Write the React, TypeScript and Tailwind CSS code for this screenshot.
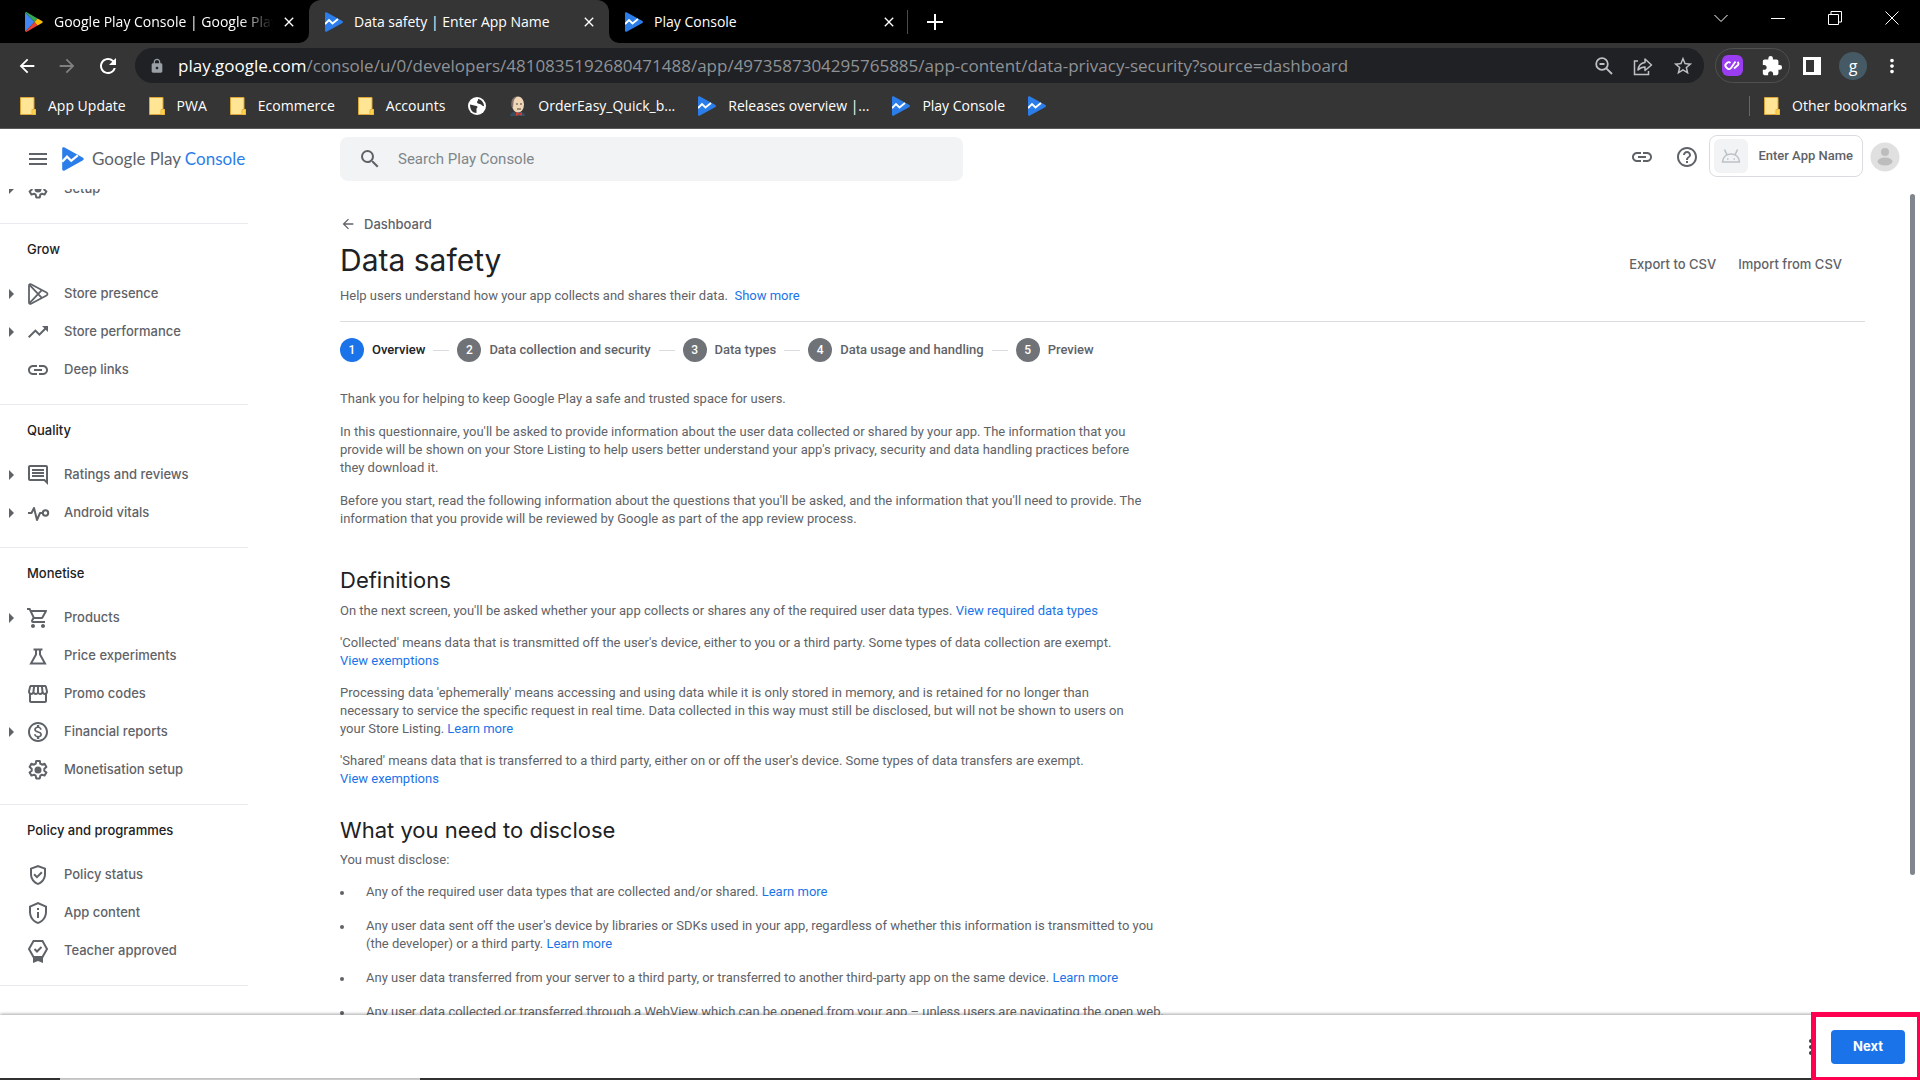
import type React from "react"

import {
  MdArrowBack,
  MdArrowForward,
  MdClose,
  MdExtension,
  MdHelpOutline,
  MdLink,
  MdLock,
  MdMenu,
  MdMoreVert,
  MdOutlineGppGood,
  MdOutlineInsertComment,
  MdOutlineMonetizationOn,
  MdOutlinePrivacyTip,
  MdOutlineShoppingCart,
  MdOutlineStorefront,
  MdRefresh,
  MdSearch,
  MdStarOutline,
  MdTrendingUp,
} from "react-icons/md"

interface IconProps {
  className?: string
}

const ConsoleLogo = ({ className = "" }: IconProps) => (
  <svg className={className} viewBox="0 0 18 20">
    <path d="M0 1.5C0 .4 1 0 2 .5L17 8.7c1.300.7 1.300 1.900 0 2.600L2 19.500C1 20 0 19.600 0 18.500Z" fill="#2b7de9" />
    <path d="M0 12.200 4 8l3.500 3.500L13 7" fill="none" stroke="#fff" strokeWidth="1.900" />
  </svg>
)

const PlayLogo = ({ className = "" }: IconProps) => (
  <svg className={className} viewBox="0 0 18 20">
    <path d="M.4.6 9.500 10 .4 19.400C.1 19 0 18.800 0 18.400V1.600C0 1.200.1.900.4.600Z" fill="#4285f4" />
    <path d="M.4.6C.9 0 1.500 0 2.200.400L12.600 6.600 9.500 10Z" fill="#34a853" />
    <path d="M.4 19.400c.5.600 1.100.600 1.800.200l10.400-6.200L9.500 10Z" fill="#ea4335" />
    <path d="M12.600 6.600 17 9c1 .6 1 1.400 0 2l-4.400 2.400L9.500 10Z" fill="#fbbc04" />
  </svg>
)

const FolderIcon = () => (
  <svg className="w-4 h-[18px] shrink-0" viewBox="0 0 16 18">
    <path d="M.5.5h13.500v12h1.500v5H.5Z" fill="#ffe594" stroke="#dba53a" />
    <path d="M12 17.500v-5h3.500v5Z" fill="#ffd34f" stroke="#e8b93c" />
  </svg>
)

const GlobeIcon = () => (
  <svg className="w-[18px] h-[18px] shrink-0" viewBox="0 0 18 18">
    <circle cx="9" cy="9" r="9" fill="#fff" />
    <path d="M2 7.500 8.500 9c1.500.5 1 2 0 2.500v4.500C4.500 16 2 12.500 2 7.500Z" fill="#353535" />
    <path d="M10 2c3.500.5 6 3.500 6 7-1 .5-2-.5-3-1.500-1.500-1-3.500-.5-4-2C8.700 4.200 10.500 4 10 2Z" fill="#353535" />
  </svg>
)

const PersonBookmarkIcon = () => (
  <svg className="w-[17px] h-[20px] shrink-0" viewBox="0 0 17 20">
    <path d="M1 20c0-3 3-4.500 7.500-4.500S16 17 16 20Z" fill="#335061" />
    <ellipse cx="9" cy="8.500" rx="6" ry="8" fill="#f0d6b7" />
    <path d="M2.500 11C1.500 4 4 .5 8 .5c-2.500 2-3.500 4-3.500 6l-.5 5Z" fill="#81726a" />
    <path d="M7 8h2M11 8h2M8 13h4" stroke="#49403a" />
    <path d="m7 16 3 1.500 3-1.500v4l-3-1.500L7 20Z" fill="#d33833" />
  </svg>
)

const ZoomOutIcon = () => (
  <svg className="w-5 h-5" viewBox="0 0 20 20" fill="none" stroke="currentColor" strokeWidth="1.800">
    <circle cx="8" cy="8" r="5.800" />
    <path d="m12.300 12.300 5.700 5.700M5.500 8h5" />
  </svg>
)

const ShareIcon = () => (
  <svg className="w-5 h-5" viewBox="0 0 20 20" fill="none" stroke="currentColor" strokeWidth="1.500">
    <path d="M5 5H1.500v13.500h14V15" />
    <path d="M5 14c.5-4.500 3-7 7-7.500V3l6.500 6-6.500 5.500V11c-3 0-5 1-7 3Z" strokeLinejoin="round" />
  </svg>
)

const AndroidIcon = () => (
  <svg className="w-5 h-4" viewBox="0 0 20 16" fill="none" stroke="#bdc1c6" strokeWidth="1.600">
    <path d="M1.500 14C2 9 5.500 6 10 6s8 3 8.500 8ZM6 7 3.500 1.500M14 7l2.500-5.500" strokeLinejoin="round" />
    <path d="M6 11h1.500M12.500 11H14" />
  </svg>
)

const GearIcon = () => (
  <svg className="w-6 h-6" viewBox="0 0 24 24" fill="none" stroke="currentColor" strokeWidth="2">
    <path
      d="M10.200 3h3.600l.5 2.700 1.700 1 2.600-.9 1.800 3.100-2.100 1.800v2l2.100 1.800-1.800 3.100-2.600-.9-1.700 1-.5 2.700h-3.600l-.5-2.700-1.700-1-2.600.9-1.800-3.100 2.100-1.800v-2L3.600 8.900l1.800-3.100 2.600.9 1.700-1Z"
      strokeLinejoin="round"
    />
    <circle cx="12" cy="12" r="3.500" fill="currentColor" stroke="none" />
  </svg>
)

const StorePresenceIcon = () => (
  <svg className="w-6 h-6" viewBox="0 0 24 24" fill="none" stroke="currentColor" strokeWidth="1.800" strokeLinejoin="round">
    <path d="M3 3.500c0-1.200 1-1.700 2-1.200l15.500 8.200c1.300.7 1.300 2.300 0 3L5 21.700c-1 .5-2 0-2-1.200Z" />
    <path d="m3.500 2.800 12.300 13M3.500 21.200l12.300-13" />
  </svg>
)

const VitalsIcon = () => (
  <svg className="w-6 h-6" viewBox="0 0 24 24" fill="none" stroke="currentColor" strokeWidth="2" strokeLinejoin="round">
    <path d="M2 12h3.500L8 7l3 12 3-7h2.500" />
    <circle cx="19.500" cy="12" r="2.700" />
  </svg>
)

const FlaskIcon = () => (
  <svg className="w-6 h-6" viewBox="0 0 24 24" fill="none" stroke="currentColor" strokeWidth="2">
    <path d="M7.500 5.500h9M10 5.500v5L5 19.500h14L14 10.500v-5" />
  </svg>
)

const TeacherIcon = () => (
  <svg className="w-6 h-6" viewBox="0 0 24 24" fill="none" stroke="currentColor" strokeWidth="2">
    <path d="M7.500 2h9l4.500 8-4.500 8h-9L3 10Z" />
    <path d="m8.500 10 2.500 2.500L15.500 8" />
    <path d="M7 18h10v6l-5-2-5 2Z" fill="currentColor" stroke="none" />
  </svg>
)

interface NavItem {
  label: string
  icon: React.ReactNode
  expandable?: boolean
}

const sections: { title: string; items: NavItem[] }[] = [
  {
    title: "Grow",
    items: [
      { label: "Store presence", icon: <StorePresenceIcon />, expandable: true },
      { label: "Store performance", icon: <MdTrendingUp />, expandable: true },
      { label: "Deep links", icon: <MdLink /> },
    ],
  },
  {
    title: "Quality",
    items: [
      { label: "Ratings and reviews", icon: <MdOutlineInsertComment />, expandable: true },
      { label: "Android vitals", icon: <VitalsIcon />, expandable: true },
    ],
  },
  {
    title: "Monetise",
    items: [
      { label: "Products", icon: <MdOutlineShoppingCart />, expandable: true },
      { label: "Price experiments", icon: <FlaskIcon /> },
      { label: "Promo codes", icon: <MdOutlineStorefront /> },
      { label: "Financial reports", icon: <MdOutlineMonetizationOn />, expandable: true },
      { label: "Monetisation setup", icon: <GearIcon /> },
    ],
  },
  {
    title: "Policy and programmes",
    items: [
      { label: "Policy status", icon: <MdOutlineGppGood /> },
      { label: "App content", icon: <MdOutlinePrivacyTip /> },
      { label: "Teacher approved", icon: <TeacherIcon /> },
    ],
  },
]

const steps = ["Overview", "Data collection and security", "Data types", "Data usage and handling", "Preview"]

const tabs = [
  { title: "Google Play Console | Google Play", icon: <PlayLogo className="w-[18px] h-5 shrink-0" /> },
  { title: "Data safety | Enter App Name", icon: <ConsoleLogo className="w-[18px] h-5 shrink-0" />, active: true },
  { title: "Play Console", icon: <ConsoleLogo className="w-[18px] h-5 shrink-0" /> },
]

const NavRow = ({ item }: { item: NavItem }) => (
  <a href="#" className="flex items-center h-[38px] pl-2 text-[#5f6368] font-medium">
    <span className="w-[18px]">
      {item.expandable && (
        <svg className="w-[7px] h-[10px]" viewBox="0 0 7 10" fill="currentColor">
          <path d="M1 0l5 5-5 5Z" />
        </svg>
      )}
    </span>
    <span className="w-6 text-[24px]">{item.icon}</span>
    <span className="ml-[14px]">{item.label}</span>
  </a>
)

const Link = ({ children }: { children: React.ReactNode }) => (
  <a href="#" className="text-[#1a73e8]">
    {children}
  </a>
)

const BrowserTabs = () => (
  <div className="flex items-center h-[43px] pl-[9px] bg-black">
    {tabs.map((tab) => (
      <div
        key={tab.title}
        className={`relative flex items-center w-[300px] h-full pl-4 pr-3 ${tab.active ? "bg-[#353535] rounded-t-xl" : ""}`}
      >
        {tab.active && (
          <>
            <svg className="absolute bottom-0 -left-[10px] w-[10px] h-[10px]" viewBox="0 0 10 10">
              <path d="M10 0v10H0A10 10 0 0 0 10 0Z" fill="#353535" />
            </svg>
            <svg className="absolute bottom-0 -right-[10px] w-[10px] h-[10px]" viewBox="0 0 10 10">
              <path d="M0 0v10h10A10 10 0 0 1 0 0Z" fill="#353535" />
            </svg>
          </>
        )}
        {tab.icon}
        <span
          className={`ml-[11px] flex-1 overflow-hidden whitespace-nowrap ${
            tab.title.length > 30 ? "mask-r-from-85% mask-r-to-100%" : ""
          }`}
        >
          {tab.title}
        </span>
        <button type="button" aria-label="Close tab" className="ml-2 text-base">
          <MdClose />
        </button>
      </div>
    ))}
    <div className="w-px h-6 -ml-0.5 bg-[#4a4a4a]" />
    <button type="button" aria-label="New tab" className="ml-[19px]">
      <svg className="w-4 h-4" viewBox="0 0 16 16" stroke="currentColor" strokeWidth="2">
        <path d="M8 0v16M0 8h16" />
      </svg>
    </button>
    <div className="flex ml-auto mb-[7px] stroke-current fill-none">
      <button type="button" aria-label="Search tabs" className="flex justify-center w-[57px]">
        <svg className="w-[14px] h-[14px]" viewBox="0 0 14 14">
          <path d="m.5 4 6.500 6.500L13.500 4" />
        </svg>
      </button>
      <button type="button" aria-label="Minimise" className="flex justify-center w-[57px]">
        <svg className="w-[14px] h-[14px]" viewBox="0 0 14 14">
          <path d="M0 7.500h14" />
        </svg>
      </button>
      <button type="button" aria-label="Restore" className="flex justify-center w-[57px]">
        <svg className="w-[14px] h-[14px]" viewBox="0 0 14 14">
          <path d="M.5 3.500h10v10H.5ZM3 3.500v-3h10.500V11H11" />
        </svg>
      </button>
      <button type="button" aria-label="Close" className="flex justify-center w-[57px]">
        <svg className="w-[14px] h-[14px]" viewBox="0 0 14 14">
          <path d="m.5.5 13 13M13.500.5l-13 13" />
        </svg>
      </button>
    </div>
  </div>
)

const Toolbar = () => (
  <div className="flex items-center h-[45px] pl-4 pr-[17px] text-[22px] bg-[#353535]">
    <button type="button" aria-label="Back">
      <MdArrowBack />
    </button>
    <button type="button" aria-label="Forward" className="ml-[18px] text-[#808080]">
      <MdArrowForward />
    </button>
    <button type="button" aria-label="Reload" className="ml-[18px] text-2xl">
      <MdRefresh />
    </button>
    <div className="flex items-center flex-1 h-[35px] ml-[15px] pl-[14px] pr-[10px] rounded-full bg-[#202124] text-[#bdc1c6]">
      <MdLock className="text-base text-[#9aa0a6]" />
      <div className="ml-[13px] flex-1 text-[17px] leading-6 text-[#8f9296] whitespace-nowrap">
        <span className="text-white">play.google.com</span>
        /console/u/0/developers/4810835192680471488/app/4973587304295765885/app-content/data-privacy-security?source=dashboard
      </div>
      <div className="flex items-center gap-[19px]">
        <ZoomOutIcon />
        <ShareIcon />
        <MdStarOutline />
      </div>
    </div>
    <div className="flex items-center gap-[18px] h-[35px] ml-[11px] px-[6px] rounded-full border border-[#505050]">
      <svg className="w-[21px] h-[21px]" viewBox="0 0 21 21">
        <rect width="21" height="21" rx="6" fill="#9a3df0" />
        <path
          d="M13.500 6.500 9 13c-1 1.500-2.500 1.500-3.500.5L4 12c-1-1-1-2 0-3l1-1c1-1 2.500-1 3.500 0M12 13.500l4-3.500c1-1 .5-2-.5-3"
          fill="none"
          stroke="#fff"
          strokeWidth="1.800"
        />
      </svg>
      <MdExtension />
    </div>
    <svg className="w-[18px] h-[18px] ml-[13px]" viewBox="0 0 18 18">
      <path d="M0 0h18v18H0ZM3 3v12h8V3Z" fill="#fff" fillRule="evenodd" />
    </svg>
    <div className="flex items-center justify-center w-7 h-7 ml-[18px] rounded-full bg-[#455a64] text-base">g</div>
    <MdMoreVert className="ml-[14px]" />
  </div>
)

const Bookmark = ({ icon, label }: { icon: React.ReactNode; label?: string }) => (
  <a href="#" className="flex items-center gap-3 whitespace-nowrap">
    {icon}
    {label}
  </a>
)

const BookmarksBar = () => (
  <div className="flex items-center h-[41px] pb-[5px] pl-5 pr-[13px] gap-[23px] bg-[#353535] border-b border-[#5a5a5a]">
    <Bookmark icon={<FolderIcon />} label="App Update" />
    <Bookmark icon={<FolderIcon />} label="PWA" />
    <Bookmark icon={<FolderIcon />} label="Ecommerce" />
    <Bookmark icon={<FolderIcon />} label="Accounts" />
    <Bookmark icon={<GlobeIcon />} />
    <Bookmark icon={<PersonBookmarkIcon />} label="OrderEasy_Quick_b..." />
    <Bookmark icon={<ConsoleLogo className="w-[18px] h-5" />} label="Releases overview |..." />
    <Bookmark icon={<ConsoleLogo className="w-[18px] h-5" />} label="Play Console" />
    <Bookmark icon={<ConsoleLogo className="w-[18px] h-5" />} />
    <div className="flex items-center gap-[14px] ml-auto">
      <div className="w-px h-5 bg-[#666]" />
      <Bookmark icon={<FolderIcon />} label="Other bookmarks" />
    </div>
  </div>
)

const ConsoleHeader = () => (
  <header className="flex items-center h-[60px] pr-5 shrink-0 text-[#5f6368]">
    <button type="button" aria-label="Menu" className="ml-[26px] text-2xl">
      <MdMenu />
    </button>
    <a href="#" className="flex items-center w-[290px] pl-3 font-['Lato',sans-serif] text-[17px]">
      <ConsoleLogo className="w-[22px] h-6" />
      <span className="ml-2">
        Google Play <span className="text-[#2b7de9]">Console</span>
      </span>
    </a>
    <label className="flex items-center w-[623px] h-11 pl-[18px] rounded-lg bg-[#f1f3f4]">
      <MdSearch className="text-2xl" />
      <input
        type="text"
        aria-label="Search Play Console"
        placeholder="Search Play Console"
        className="flex-1 ml-4 outline-none font-['Roboto',sans-serif] text-[15px] placeholder:text-[#80868b]"
      />
    </label>
    <div className="flex items-center ml-auto mb-1">
      <MdLink className="text-2xl" />
      <MdHelpOutline className="ml-[21px] text-2xl" />
      <button
        type="button"
        className="flex items-center h-[42px] ml-[10px] mb-0.5 pl-1 pr-[9px] rounded-lg border border-[#dadce0] font-['Roboto',sans-serif] text-[13px] font-medium"
      >
        <span className="flex items-center justify-center w-[34px] h-[34px] rounded-md bg-[#f1f3f4]">
          <AndroidIcon />
        </span>
        <span className="ml-[10px]">Enter App Name</span>
      </button>
      <svg className="w-[30px] h-[30px] ml-[7px]" viewBox="0 0 30 30">
        <circle cx="15" cy="15" r="14.500" fill="#e0e0e0" />
        <circle cx="15" cy="10" r="4" fill="#bdbdbd" />
        <ellipse cx="15" cy="19.500" rx="7.500" ry="4" fill="#bdbdbd" />
      </svg>
    </div>
  </header>
)

const Sidebar = () => (
  <nav className="w-[248px] shrink-0 overflow-hidden text-[13px]">
    <div className="-mt-[19px] pb-[15px]">
      <NavRow item={{ label: "Setup", icon: <GearIcon />, expandable: true }} />
    </div>
    {sections.map((section) => (
      <div key={section.title} className="pb-[15px] border-t border-[#e8eaed]">
        <h2 className="flex items-center h-[51px] pl-[27px] text-[#202124] font-medium">{section.title}</h2>
        {section.items.map((item) => (
          <NavRow key={item.label} item={item} />
        ))}
      </div>
    ))}
    <div className="border-t border-[#e8eaed]" />
  </nav>
)

const Stepper = () => (
  <ol className="flex items-center gap-2 mt-4 font-medium">
    {steps.map((step, index) => (
      <li key={step} className="flex items-center gap-2">
        {index > 0 && <span className="w-4 h-px bg-[#dadce0]" />}
        <span
          className={`flex items-center justify-center w-6 h-6 rounded-full text-white text-xs ${
            index === 0 ? "bg-[#1a73e8]" : "bg-[#6f7377]"
          }`}
        >
          {index + 1}
        </span>
        <span className={index === 0 ? "text-[#202124]" : ""}>{step}</span>
      </li>
    ))}
  </ol>
)

const App = () => {
  return (
    <div className="flex flex-col h-screen overflow-hidden bg-white font-['Inter',sans-serif]">
      <div className="shrink-0 font-['Open_Sans',sans-serif] text-[14px] text-white">
        <BrowserTabs />
        <Toolbar />
        <BookmarksBar />
      </div>

      <ConsoleHeader />

      <div className="flex flex-1 min-h-0">
        <Sidebar />

        <main className="flex-1 overflow-hidden pl-[92px] pr-[45px] pt-[26px] font-['Roboto',sans-serif] text-[13px] leading-[18px] text-[#5f6368]">
          <a href="#" className="flex items-center gap-2 font-['Inter',sans-serif] font-medium">
            <MdArrowBack className="text-base" />
            Dashboard
          </a>
          <div className="flex items-center justify-between">
            <h1 className="mt-[9px] font-['Inter',sans-serif] text-[30px] leading-9 text-[#202124]">Data safety</h1>
            <div className="flex gap-[22px] pr-[23px] mt-4 font-['Inter',sans-serif]">
              <button type="button" className="font-medium">
                Export to CSV
              </button>
              <button type="button" className="font-medium">
                Import from CSV
              </button>
            </div>
          </div>
          <p className="mt-[9px] pb-4 border-b border-[#dadce0]">
            Help users understand how your app collects and shares their data. &nbsp;<Link>Show more</Link>
          </p>

          <Stepper />

          <div className="flex flex-col gap-[15px] mt-7">
            <p>Thank you for helping to keep Google Play a safe and trusted space for users.</p>
            <p>
              In this questionnaire, you'll be asked to provide information about the user data collected or shared by your app. The information that you
              <br />
              provide will be shown on your Store Listing to help users better understand your app's privacy, security and data handling practices before
              <br />
              they download it.
            </p>
            <p>
              Before you start, read the following information about the questions that you'll be asked, and the information that you'll need to provide. The
              <br />
              information that you provide will be reviewed by Google as part of the app review process.
            </p>
          </div>

          <h2 className="mt-[38px] font-['Inter',sans-serif] text-[22px] leading-7 text-[#202124]">Definitions</h2>
          <div className="flex flex-col gap-[14px] mt-2">
            <p>
              On the next screen, you'll be asked whether your app collects or shares any of the required user data types. <Link>View required data types</Link>
            </p>
            <p>
              'Collected' means data that is transmitted off the user's device, either to you or a third party. Some types of data collection are exempt.
              <br />
              <Link>View exemptions</Link>
            </p>
            <p>
              Processing data 'ephemerally' means accessing and using data while it is only stored in memory, and is retained for no longer than
              <br />
              necessary to service the specific request in real time. Data collected in this way must still be disclosed, but will not be shown to users on
              <br />
              your Store Listing. <Link>Learn more</Link>
            </p>
            <p>
              'Shared' means data that is transferred to a third party, either on or off the user's device. Some types of data transfers are exempt.
              <br />
              <Link>View exemptions</Link>
            </p>
          </div>

          <h2 className="mt-7 font-['Inter',sans-serif] text-[22px] leading-7 text-[#202124]">What you need to disclose</h2>
          <p className="mt-[7px]">You must disclose:</p>
          <ul className="flex flex-col gap-4 mt-[14px] whitespace-nowrap">
            {[
              <>
                Any of the required user data types that are collected and/or shared. <Link>Learn more</Link>
              </>,
              <>
                Any user data sent off the user's device by libraries or SDKs used in your app, regardless of whether this information is transmitted to you
                <br />
                (the developer) or a third party. <Link>Learn more</Link>
              </>,
              <>
                Any user data transferred from your server to a third party, or transferred to another third-party app on the same device.{" "}
                <Link>Learn more</Link>
              </>,
              <>Any user data collected or transferred through a WebView which can be opened from your app – unless users are navigating the open web.</>,
            ].map((text, index) => (
              <li key={index} className="flex">
                <span className="w-1 h-1 mt-2 mr-[22px] shrink-0 rounded-full bg-[#5f6368]" />
                <span>{text}</span>
              </li>
            ))}
          </ul>
        </main>

        {/* Scrollbar */}
        <div className="w-[10px] pt-[5px] shrink-0">
          <div className="w-[5px] h-[83%] rounded-full bg-[#80868b]" />
        </div>
      </div>

      <footer className="relative flex items-center justify-end h-[63px] pr-[15px] shrink-0 bg-white shadow-[0_-1px_3px_rgba(0,0,0,0.35)]">
        <MdMoreVert className="mr-2 text-2xl text-[#3c4043]" />
        <button type="button" className="w-[74px] h-[34px] rounded bg-[#1a73e8] text-white text-[13px] font-bold">
          Next
        </button>
        {/* Highlight around the Next button */}
        <div className="absolute -top-[3px] -bottom-[2px] right-0 w-[109px] z-10 border-t-[5px] border-l-[5px] border-r-[3px] border-b-[3px] border-[#ff0050]" />
      </footer>

      <div className="flex h-[2px] shrink-0 bg-[#333]">
        <div className="w-[360px] ml-[60px] bg-[#d0d0d0]" />
      </div>
    </div>
  )
}

export default App
